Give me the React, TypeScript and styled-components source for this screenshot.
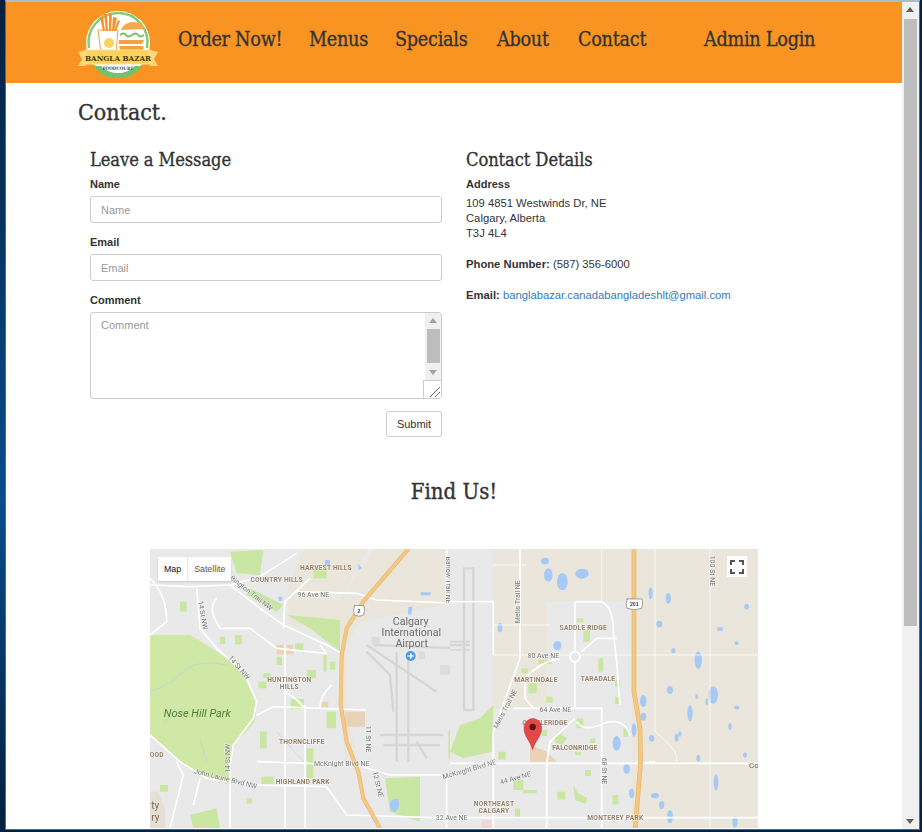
import React from "react";
import styled, { createGlobalStyle } from "styled-components";

const Global = createGlobalStyle`
  html, body { margin: 0; padding: 0; height: 100%; overflow: hidden; background: #03203f; }
  * { box-sizing: border-box; }
  body { font-family: "Liberation Sans", Arial, sans-serif; font-size: 11.25px; color: #333; }
`;

const slab = `"DejaVu Serif Condensed", "DejaVu Serif", serif`;

const Frame = styled.div`
  width: 922px; height: 832px; padding: 0 2px 2px 5px;
  background: linear-gradient(180deg, #03203f 0%, #0a4c8c 60%, #03203f 100%);
`;
const Win = styled.div`
  width: 915px; height: 830px; display: flex; overflow: hidden; background: #fff;
  border: 1px solid #1a78c8; border-top: 2px solid #a9bbcd; border-width: 2px 1px 1px 1px;
`;
const Content = styled.div`flex: 1; min-width: 0; display: flex; flex-direction: column;`;
const Header = styled.header`
  height: 81px; flex: none; background: #f99322; display: flex; align-items: center; padding-left: 71px;
`;
const Nav = styled.nav`display: flex; align-items: center; margin-left: 19px; height: 100%; padding-bottom: 6px;`;
const NavLink = styled.a<{ $w: number }>`
  font-family: ${slab}; font-size: 19.6px; letter-spacing: -0.25px; -webkit-text-stroke: 0.3px #333; color: #333; width: ${p => p.$w}px; white-space: nowrap;
`;
const Main = styled.main`flex: 1; min-height: 0; padding: 0 0 0 72px; display: flex; flex-direction: column;`;
const Title = styled.h1`font-family: ${slab}; font-weight: 400; font-size: 23px; -webkit-text-stroke: 0.35px #333; line-height: 30px; color: #333; margin: 14px 0 0;`;
const Columns = styled.div`display: flex; margin-top: 22px; padding-left: 12px; gap: 24px;`;
const FormCol = styled.form`width: 352px; display: flex; flex-direction: column;`;
const InfoCol = styled.div`flex: 1;`;
const SubHead = styled.h2`font-family: ${slab}; font-weight: 400; font-size: 18.2px; letter-spacing: -0.1px; -webkit-text-stroke: 0.3px #333; line-height: 24px; color: #333; margin: -1px 0 5px;`;
const Label = styled.label`display: block; font-weight: 700; font-size: 11px; line-height: 14px; margin-bottom: 5px; color: #333;`;
const Input = styled.input`
  display: block; width: 100%; height: 27px; border: 1px solid #ccc; border-radius: 3px; padding: 0 10px;
  font: 11px "Liberation Sans", Arial, sans-serif; margin-bottom: 12px; outline: none;
  &::placeholder { color: #999; opacity: 1; }
`;
const AreaWrap = styled.div`position: relative; height: 87px;`;
const Area = styled.textarea`
  display: block; width: 100%; height: 87px; border: 1px solid #ccc; border-radius: 3px; padding: 6px 10px;
  font: 11px "Liberation Sans", Arial, sans-serif; resize: none; outline: none;
  &::placeholder { color: #999; opacity: 1; }
`;
const AreaBar = styled.div`
  position: absolute; top: 1px; right: 1px; width: 16px; height: 67px; background: #f0f0f0;
`;
const BarThumb = styled.div`position: absolute; left: 2px; top: 16px; width: 13px; height: 34px; background: #bdbdbd;`;
const ArrowUp = styled.i<{ $dark?: boolean }>`
  position: absolute; left: 4px; top: 5px; border: 4px solid transparent; border-top: 0;
  border-bottom: 5px solid ${p => (p.$dark ? "#606060" : "#a3a3a3")};
`;
const ArrowDown = styled.i<{ $dark?: boolean }>`
  position: absolute; left: 4px; bottom: 5px; border: 4px solid transparent; border-bottom: 0;
  border-top: 5px solid ${p => (p.$dark ? "#606060" : "#a3a3a3")};
`;
const Grip = styled.svg`position: absolute; right: 1px; bottom: 1px; width: 18px; height: 18px; background: #fff; border-left: 1px solid #ccc; border-top: 1px solid #ccc;`;
const SubmitRow = styled.div`display: flex; justify-content: flex-end; margin-top: 12px;`;
const Submit = styled.button`
  width: 56px; height: 26px; background: #fff; border: 1px solid #ccc; border-radius: 3px; padding: 0;
  font: 11px "Liberation Sans", Arial, sans-serif; color: #333;
`;
const Detail = styled.p`margin: 0 0 16px; line-height: 15px; color: #333;`;
const Strong = styled.b`font-weight: 700;`;
const DetailLabel = styled.b`display: block; font-weight: 700; font-size: 11px; line-height: 14px; margin-bottom: 5px;`;
const MailLink = styled.a`color: #337ab7;`;
const FindUs = styled.h2`
  font-family: ${slab}; font-weight: 400; font-size: 22px; -webkit-text-stroke: 0.35px #333; line-height: 30px; color: #333; text-align: center;
  margin: 40px 0 42px; width: 752px;
`;
const MapBox = styled.div`width: 608px; height: 279px; margin-left: 72px; flex: none; position: relative; overflow: hidden; background: #e8e8e8;`;
const MapSvg = styled.svg`display: block; width: 608px; height: 279px; filter: blur(0.4px);`;
const MapType = styled.div`
  position: absolute; left: 8px; top: 8px; height: 24px; display: flex; background: #fff;
  font-size: 8.8px; align-items: center; box-shadow: 0 1px 2px rgba(0,0,0,.15);
`;
const MapTab = styled.span<{ $on?: boolean }>`
  padding: 0 6px; line-height: 24px; color: ${p => (p.$on ? "#111" : "#555")};
  & + & { border-left: 1px solid #e6e6e6; }
`;
const FullBtn = styled.div`
  position: absolute; right: 11px; top: 7px; width: 20px; height: 21px; background: #fff;
  display: flex; align-items: center; justify-content: center;
`;
const Scroll = styled.div`width: 17px; flex: none; background: #f0f0f0; position: relative;`;
const ScrollThumb = styled.div`position: absolute; left: 2px; top: 17px; width: 13px; height: 607px; background: #bdbdbd;`;

const land = "#eae6dc", gray = "#e9e9e9", green = "#c9e6a3", park = "#cfe8a6", water = "#a6c9f5", hwy = "#f4c881", tan = "#e9d3b6";

type L = [string, number, number, number?];
const w1: string[] = [
  "M0 120 L120 125 L240 120 L330 95 L440 25",
  "M440 140 L620 145 L680 165 L930 175",
  "M400 250 L405 170 L480 100",
  "M240 120 L330 190 L400 240 L530 300 L575 325",
  "M140 130 L150 250 L200 310 L280 380 L320 470 L310 520 L250 600 L240 660 L240 850",
  "M320 510 L370 485 L650 495",
  "M405 300 L405 850",
  "M465 480 L465 850",
  "M320 650 L620 660 L720 690 L930 690",
  "M0 570 L90 650 L170 700 L300 720 L530 725 L590 810 L930 820",
  "M0 100 Q50 150 50 230 L0 270",
  "M380 310 L530 325 L510 300",
  "M80 650 L100 690 L60 850",
  "M890 690 L890 850",
  "M890 12 L890 175",
  "M150 700 L130 780",
  "M200 160 Q170 190 210 250 L300 250 L380 310",
  "M510 490 Q510 450 545 420",
  "M405 440 Q440 460 465 490",
];
const w2: string[] = [
  "M210 12 L210 340 L170 450 L130 560 L130 850",
  "M0 170 L130 170 L130 330",
  "M0 655 L930 655",
  "M375 170 L450 170",
  "M375 170 L375 490",
  "M190 490 L455 490 L455 850",
  "M290 655 L290 850",
  "M290 655 L300 590 L375 520",
  "M0 818 L930 818",
  "M570 655 L615 650",
  "M225 400 L225 460 L250 490",
  "M225 400 Q270 350 330 340",
  "M395 320 L440 280 L500 280",
  "M450 170 Q490 180 490 260 L500 350 L510 480",
  "M380 530 Q400 560 450 540 Q520 510 540 570",
];
const thin: string[] = [
  "M130 330 L930 330",
  "M615 12 L615 560 Q690 620 680 650",
  "M780 12 L780 850",
  "M130 240 L300 240",
  "M455 12 L455 170",
  "M130 60 L230 60",
];
const runwaysW = ["M650 300 L860 440", "M740 320 L740 650", "M775 320 L775 650", "M690 570 L880 570", "M700 600 L870 600", "M650 320 L720 390 L730 500", "M800 590 L830 640", "M670 300 L930 310"];
const labels1: L[] = [
  ["HARVEST HILLS", 528, 74], ["COUNTRY HILLS", 380, 110], ["HUNTINGTON", 418, 410], ["HILLS", 418, 432],
  ["THORNCLIFFE", 455, 596], ["HIGHLAND PARK", 458, 716], ["OOD", 20, 636],
];
const roads1: L[] = [
  ["96 Ave NE", 490, 156], ["Bington Trail NW", 300, 150, 38], ["14 St NW", 152, 212, 80], ["14 St NW", 262, 372, 50],
  ["McKnight Blvd NE", 575, 662], ["John Laurie Blvd NW", 225, 708, 14], ["14 St NW", 240, 640, -90],
  ["11 St NE", 648, 582, 90], ["12 St NE", 677, 720, 76], ["Barlow Trail NE", 888, 105, 90],
];
const labels2: L[] = [
  ["SADDLE RIDGE", 400, 254], ["MARTINDALE", 258, 410], ["TARADALE", 444, 408], ["CASTLERIDGE", 285, 541],
  ["FALCONRIDGE", 375, 616], ["NORTHEAST", 132, 782], ["CALGARY", 132, 804], ["MONTEREY PARK", 496, 824],
];
const roads2: L[] = [
  ["Metis Trail NE", 210, 170, -90], ["80 Ave NE", 280, 338], ["64 Ave NE", 316, 500], ["Metis Trail NE", 172, 495, -62],
  ["McKnight Blvd NE", 60, 680, -16], ["44 Ave NE", 198, 706, -16], ["68 St NE", 456, 678, 90],
  ["100 St NE", 780, 78, 90], ["32 Ave NE", 5, 824],
];
const lakes2: [number, number, number, number][] = [
  [337, 110, 16, 26], [396, 86, 20, 15], [295, 90, 13, 20], [285, 48, 12, 10], [745, 345, 11, 26], [790, 450, 14, 26],
  [720, 505, 8, 24], [660, 435, 9, 12], [580, 468, 10, 18], [655, 160, 8, 16], [602, 145, 6, 18], [500, 595, 12, 22],
  [580, 515, 9, 12], [552, 555, 7, 20], [798, 712, 7, 24], [660, 815, 9, 20], [530, 672, 10, 14], [615, 752, 12, 8],
  [545, 745, 8, 14], [855, 830, 8, 18], [890, 185, 7, 9], [628, 237, 9, 10], [150, 248, 7, 14], [322, 302, 12, 14],
  [810, 252, 9, 6], [670, 317, 6, 8], [860, 295, 6, 6], [690, 567, 5, 8], [680, 578, 6, 12], [840, 545, 5, 10], [885, 630, 6, 8],
  [605, 580, 8, 10], [745, 640, 6, 10], [740, 455, 4, 8], [770, 470, 4, 10], [860, 488, 8, 6], [635, 780, 8, 12],
];
const greens1 = ["M90 170h20v30h-20z", "M240 20L340 15L330 90L260 85z", "M300 130L400 180L380 200L290 150z", "M410 210L570 225L570 320L480 250z", "M210 275h16v22h-16z", "M255 270h20v28h-20z", "M435 295h25v20h-25z", "M380 335h16v25h-16z", "M340 385h22v14h-22z", "M470 375h28v25h-28z", "M325 410h24v20h-24z", "M422 462h40v30h-40z", "M530 500h28v50h-28z", "M330 560h20v50h-20z", "M470 610h20v90h-20z", "M335 695h36v22h-36z", "M705 700L810 695L810 830L720 800z", "M895 560L930 520V640H895z", "M120 810L200 790L210 850H130z", "M290 760h16v16h-16z", "M30 720h24v20h-24z", "M490 70h40v30h-40z", "M520 330h10v50h-10z", "M540 350h16v24h-16z"];
const greens2 = ["M0 620L30 540L90 520L130 480L125 620L40 640z", "M235 415h25v30h-25z", "M288 455h20v18h-20z", "M265 345h40v12h-40z", "M400 255h20v35h-20z", "M445 340h15v40h-15z", "M320 560l30 20l-15 20l-22-10z", "M380 520h20v30h-20z", "M420 580h16v14h-16z", "M495 405h16v20h-16z", "M145 620h22v24h-22z", "M190 705h30v30h-30z", "M220 735h40v10h-40z", "M322 740h24v24h-24z", "M370 720l14 25l28 15l-5 16l-32-10z", "M487 750h18v28h-18z", "M405 675h18v18h-18z", "M495 455h14v22h-14z", "M215 370h18v14h-18z", "M275 555h16v18h-16z", "M375 620h18v10h-18z", "M195 790h15v30h-15z", "M520 550h15v25h-15z", "M380 220h20v12h-20z"];

const Shield = ({ x, y, t, w }: { x: number; y: number; t: string; w: number }) => (
  <g>
    <path d={`M${x - w / 2} ${y - 16}h${w}q4 12-1 28l-${w / 2 - 1} 4l-${w / 2 - 1}-4q-5-16 1-28z`} fill="#fff" stroke="#777" strokeWidth="2" />
    <text x={x} y={y + 6} fontSize="16" fontWeight="700" fill="#444" textAnchor="middle" fontFamily="Liberation Sans">{t}</text>
  </g>
);

const MapText = ({ items, kind }: { items: L[]; kind: "area" | "road" }) => (
  <>
    {items.map(([t, x, y, r], i) => (
      <text
        key={i} x={x} y={y} textAnchor="middle" transform={r ? `rotate(${r} ${x} ${y})` : undefined}
        fontFamily="Roboto, Liberation Sans, sans-serif"
        fontSize={kind === "area" ? 20 : 21} fontWeight={kind === "area" ? 700 : 400}
        letterSpacing={kind === "area" ? 0.6 : 0} fill={kind === "area" ? "#96826a" : "#777"}
        stroke="#fff" strokeWidth="3" strokeOpacity=".6" paintOrder="stroke"
      >{t}</text>
    ))}
  </>
);

const MapArt = () => (
  <MapSvg viewBox="150 549 608 279" aria-label="Map">
    <rect x="150" y="549" width="608" height="279" fill={gray} />
    <rect x="493" y="549" width="265" height="279" fill={land} />
    <path d="M287 590L340 600L375 549H490V820H395L345 760L340 640L290 625z" fill={land} />
    <g transform="translate(150 545) scale(.33333)">
      <path d="M630 230L930 170V860H720L640 760L610 590L590 460L590 300z" fill={gray} />
      <path d="M720 12H930V170L650 150z" fill={land} />
      <path d="M460 12H650L580 150L410 150z" fill={land} />
      <path d="M0 270L120 270L170 300L230 340L290 400L320 470L315 530L260 590L240 640L240 720L150 690L90 650L0 565z" fill={park} />
      {greens1.map((d, i) => <path key={i} d={d} fill={green} />)}
      <path d="M380 300h50v28h-50zM510 470h25v20h-25zM585 500h60v45h-60z" fill={tan} />
      <path d="M0 740h25l20 50v70H0z" fill="#e4e0d6" />
      <path d="M0 440Q60 420 100 380T230 360M40 540L80 490M150 580L170 650M380 560L470 660" fill="none" stroke="#a9cfe8" strokeWidth="1.5" />
      <path d="M720 770q10-12 25-8q8 20-8 38q-20 5-17-30z" fill={water} />
      <path d="M812 142h30v9h-30zM775 185l12 0l-3 24l-10-3zM385 155h12v12h-12zM525 45h15v15h-15zM625 55l10 15l-10 6z" fill={water} />
      {runwaysW.map((d, i) => <path key={i} d={d} fill="none" stroke="#d6d6d6" strokeWidth="7" />)}
      <path d="M665 275h25v22h-25zM805 320h20v22h-20zM870 360h30v30h-30" fill="#dcdcdc" />
      {w1.map((d, i) => <path key={i} d={d} fill="none" stroke="#fff" strokeWidth="5" strokeLinejoin="round" />)}
      <path d="M775 12L640 170L590 250L575 330L572 480L590 590L625 680L640 760L690 850" fill="none" stroke="#e7b56d" strokeWidth="12" strokeLinejoin="round" />
      <path d="M775 12L640 170L590 250L575 330L572 480L590 590L625 680L640 760L690 850" fill="none" stroke={hwy} strokeWidth="9" strokeLinejoin="round" />
      <Shield x={627} y={198} t="2" w={30} />
      <circle cx="782" cy="333" r="15" fill="#4a9be8" />
      <path d="M772 333h20M782 325l4 8l-4 8l-1-8z" stroke="#fff" strokeWidth="3" fill="#fff" />
      <MapText items={labels1} kind="area" />
      <MapText items={roads1} kind="road" />
      <text fontSize="32" fill="#6f6f6f" textAnchor="middle" fontFamily="Roboto, Liberation Sans, sans-serif">
        <tspan x="782" y="239">Calgary</tspan>
        <tspan x="784" y="273">International</tspan>
        <tspan x="785" y="306">Airport</tspan>
      </text>
      <text x="142" y="516" fontSize="33" fontStyle="italic" fill="#4f7d3d" textAnchor="middle" fontFamily="Roboto, Liberation Sans, sans-serif">Nose Hill Park</text>
      <text fontSize="30" fill="#7d6a55" textAnchor="middle" fontFamily="Roboto, Liberation Sans, sans-serif">
        <tspan x="16" y="792">ty</tspan>
        <tspan x="16" y="828">ry</tspan>
      </text>
    </g>
    <g transform="translate(450 545) scale(.33333)">
      <path d="M290 170H545V650H290zM130 490H545V860H130z" fill={gray} />
      <path d="M0 12H130V860H0z" fill={gray} />
      <path d="M130 12H210V480H130z" fill={land} />
      {greens2.map((d, i) => <path key={i} d={d} fill={green} />)}
      <path d="M240 600L290 620L320 650H240z" fill={tan} />
      <path d="M95 825h30v30H95z" fill="#f0d7d7" />
      {lakes2.map(([x, y, a, b], i) => <ellipse key={i} cx={x} cy={y} rx={a} ry={b} fill={water} />)}
      <path d="M42 70h28V495H42zM0 300h60" fill="none" stroke="#d6d6d6" strokeWidth="7" />
      <path d="M0 290h60M0 315h60" stroke="#d6d6d6" strokeWidth="5" fill="none" />
      {thin.map((d, i) => <path key={i} d={d} fill="none" stroke="#fff" strokeWidth="2.5" strokeOpacity=".9" />)}
      {w2.map((d, i) => <path key={i} d={d} fill="none" stroke="#fff" strokeWidth="5" strokeLinejoin="round" />)}
      <circle cx="375" cy="335" r="15" fill={gray} stroke="#fff" strokeWidth="6" />
      <path d="M552 12V440L570 550L572 650L555 860" fill="none" stroke="#e7b56d" strokeWidth="14" strokeLinejoin="round" />
      <path d="M552 12V440L570 550L572 650L555 860" fill="none" stroke={hwy} strokeWidth="10" strokeLinejoin="round" />
      <Shield x={553} y={178} t="201" w={46} />
      <MapText items={labels2} kind="area" />
      <MapText items={roads2} kind="road" />
      <text x="912" y="670" fontSize="24" fill="#666" textAnchor="middle" fontFamily="Roboto, Liberation Sans, sans-serif">Co</text>
      <path d="M248 614C240 585 222 575 222 548A26 27 0 0 1 275 548C275 575 256 585 248 614z" fill="#e2474a" stroke="#b33" strokeWidth="1.5" />
      <circle cx="248" cy="546" r="9.5" fill="#5a1414" />
    </g>
  </MapSvg>
);

const Logo = () => (
  <svg width="82" height="70" viewBox="0 0 82 70" aria-label="Bangla Bazar Foodcourt">
    <circle cx="41" cy="35" r="32" fill="#fff" />
    <path d="M12 40A29.500 29.500 0 1 1 70 40" fill="#fff" stroke="#84cc7c" strokeWidth="2.500" />
    <path d="M17 58A29 29 0 0 0 65 58z" fill="#72c26c" />
    <path d="M24 58A24 24 0 0 0 58 58z" fill="#fff" />
    <path d="M21 22h20l-2 23H24z" fill="#fff" stroke="#f6a33b" strokeWidth="1" />
    <path d="M23 9l3 14h2L26 9zM27 6l2 17h2l-1-17zM32 6l0 17h2l1-17zM36 9l-1 14h2l3-13zM41 12l-4 11h2l4-10z" fill="#f7902a" />
    <circle cx="32" cy="35" r="5" fill="#fbd45f" />
    <path d="M44 22a13 12 0 0 1 24-1z" fill="#f8a849" />
    <path d="M43 27q4-3 6 0t6 0t6 0t6 0" fill="none" stroke="#72c26c" strokeWidth="1.800" />
    <path d="M42 32h25l-2 4H42z" fill="#f7a13d" />
    <path d="M42 38h24q2 4-3 6H44z" fill="#f7a13d" />
    <path d="M1 44L9 42V58H1L5 51z" fill="#fbd779" />
    <path d="M81 44L73 42V58H81L77 51z" fill="#fbd779" />
    <rect x="9" y="42" width="64" height="14" fill="#fbd25a" stroke="#fce39a" strokeWidth="1" />
    <text x="41" y="52.500" textAnchor="middle" fontFamily="DejaVu Serif Condensed, DejaVu Serif, serif" fontWeight="700" fontSize="8" fill="#4a3b10">BANGLA BAZAR</text>
    <text x="41" y="62" textAnchor="middle" fontFamily="DejaVu Serif Condensed, DejaVu Serif, serif" fontWeight="700" fontSize="4.600" fill="#444">FOODCOURT</text>
  </svg>
);

export default function App() {
  return (
    <>
      <Global />
      <Frame>
        <Win>
          <Content>
            <Header>
              <Logo />
              <Nav>
                <NavLink $w={131}>Order Now!</NavLink>
                <NavLink $w={86}>Menus</NavLink>
                <NavLink $w={102}>Specials</NavLink>
                <NavLink $w={81}>About</NavLink>
                <NavLink $w={126}>Contact</NavLink>
                <NavLink $w={116}>Admin Login</NavLink>
              </Nav>
            </Header>
            <Main>
              <Title>Contact.</Title>
              <Columns>
                <FormCol>
                  <SubHead>Leave a Message</SubHead>
                  <Label>Name</Label>
                  <Input placeholder="Name" />
                  <Label>Email</Label>
                  <Input placeholder="Email" />
                  <Label>Comment</Label>
                  <AreaWrap>
                    <Area placeholder="Comment" />
                    <AreaBar>
                      <ArrowUp />
                      <BarThumb />
                      <ArrowDown />
                    </AreaBar>
                    <Grip viewBox="0 0 17 17">
                      <path d="M6 16L16 6M11 16L16 11" stroke="#666" strokeWidth="1" fill="none" />
                    </Grip>
                  </AreaWrap>
                  <SubmitRow><Submit type="button">Submit</Submit></SubmitRow>
                </FormCol>
                <InfoCol>
                  <SubHead>Contact Details</SubHead>
                  <DetailLabel>Address</DetailLabel>
                  <Detail>109 4851 Westwinds Dr, NE<br />Calgary, Alberta<br />T3J 4L4</Detail>
                  <Detail><Strong>Phone Number:</Strong> (587) 356-6000</Detail>
                  <Detail><Strong>Email:</Strong> <MailLink>banglabazar.canadabangladeshlt@gmail.com</MailLink></Detail>
                </InfoCol>
              </Columns>
              <FindUs>Find Us!</FindUs>
              <MapBox>
                <MapArt />
                <MapType>
                  <MapTab $on>Map</MapTab>
                  <MapTab>Satellite</MapTab>
                </MapType>
                <FullBtn>
                  <svg width="14" height="14" viewBox="0 0 14 14" fill="none" stroke="#555" strokeWidth="2">
                    <path d="M1 5V1H5M9 1H13V5M13 9V13H9M5 13H1V9" />
                  </svg>
                </FullBtn>
              </MapBox>
            </Main>
          </Content>
          <Scroll>
            <ArrowUp $dark />
            <ScrollThumb />
            <ArrowDown $dark />
          </Scroll>
        </Win>
      </Frame>
    </>
  );
}
